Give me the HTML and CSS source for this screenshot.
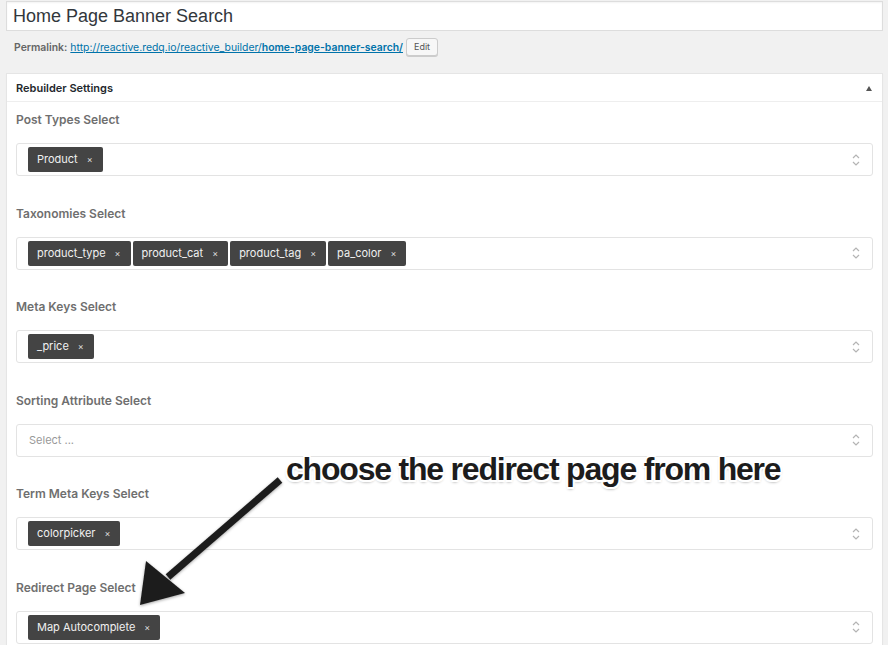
FILE: index.html
```html
<!DOCTYPE html>
<html>
<head>
<meta charset="utf-8">
<link rel="stylesheet" href="styles.css">
</head>
<body>
<div class="wrap">
  <div class="title-input">Home Page Banner Search</div>
  <div class="permalink">
    <span class="pl-label">Permalink:</span>
    <a class="pl-link" href="#">http://reactive.redq.io/reactive_builder/<b>home-page-banner-search/</b></a>
    <span class="edit-btn">Edit</span>
  </div>
  <div class="postbox">
    <div class="postbox-head">
      <span class="head-title">Rebuilder Settings</span>
      <span class="toggle"></span>
    </div>
    <div class="postbox-body">
      <div class="field">
        <div class="label">Post Types Select</div>
        <div class="select">
          <div class="chips"><span class="chip">Product<i>×</i></span></div>
          <svg class="chev" width="10" height="14" viewBox="0 0 10 14"><path d="M2 5 L5 2 L8 5 M2 9 L5 12 L8 9" fill="none" stroke="#b4b4b4" stroke-width="1.2"/></svg>
        </div>
      </div>
      <div class="field">
        <div class="label">Taxonomies Select</div>
        <div class="select">
          <div class="chips"><span class="chip">product_type<i>×</i></span><span class="chip">product_cat<i>×</i></span><span class="chip">product_tag<i>×</i></span><span class="chip">pa_color<i>×</i></span></div>
          <svg class="chev" width="10" height="14" viewBox="0 0 10 14"><path d="M2 5 L5 2 L8 5 M2 9 L5 12 L8 9" fill="none" stroke="#b4b4b4" stroke-width="1.2"/></svg>
        </div>
      </div>
      <div class="field">
        <div class="label">Meta Keys Select</div>
        <div class="select">
          <div class="chips"><span class="chip">_price<i>×</i></span></div>
          <svg class="chev" width="10" height="14" viewBox="0 0 10 14"><path d="M2 5 L5 2 L8 5 M2 9 L5 12 L8 9" fill="none" stroke="#b4b4b4" stroke-width="1.2"/></svg>
        </div>
      </div>
      <div class="field">
        <div class="label">Sorting Attribute Select</div>
        <div class="select">
          <div class="chips"><span class="placeholder">Select ...</span></div>
          <svg class="chev" width="10" height="14" viewBox="0 0 10 14"><path d="M2 5 L5 2 L8 5 M2 9 L5 12 L8 9" fill="none" stroke="#b4b4b4" stroke-width="1.2"/></svg>
        </div>
      </div>
      <div class="field">
        <div class="label">Term Meta Keys Select</div>
        <div class="select">
          <div class="chips"><span class="chip">colorpicker<i>×</i></span></div>
          <svg class="chev" width="10" height="14" viewBox="0 0 10 14"><path d="M2 5 L5 2 L8 5 M2 9 L5 12 L8 9" fill="none" stroke="#b4b4b4" stroke-width="1.2"/></svg>
        </div>
      </div>
      <div class="field">
        <div class="label">Redirect Page Select</div>
        <div class="select">
          <div class="chips"><span class="chip">Map Autocomplete<i>×</i></span></div>
          <svg class="chev" width="10" height="14" viewBox="0 0 10 14"><path d="M2 5 L5 2 L8 5 M2 9 L5 12 L8 9" fill="none" stroke="#b4b4b4" stroke-width="1.2"/></svg>
        </div>
      </div>
    </div>
  </div>
</div>
<svg class="arrow" width="888" height="645" viewBox="0 0 888 645">
  <defs>
    <filter id="sh" x="-20%" y="-20%" width="140%" height="140%">
      <feDropShadow dx="0" dy="1" stdDeviation="1.5" flood-color="#000" flood-opacity="0.35"/>
    </filter>
  </defs>
  <g filter="url(#sh)">
    <line x1="280" y1="480" x2="168" y2="577" stroke="#1e1e1e" stroke-width="7"/>
    <polygon points="140,605 146,561 185,593" fill="#1e1e1e"/>
  </g>
</svg>
<div class="note">choose the redirect page from here</div>
</body>
</html>
```
FILE: styles.css
```css
html, body {
  margin: 0;
  padding: 0;
  background: #f1f1f1;
  font-family: Inter, "Helvetica Neue", Arial, sans-serif;
  color: #23282d;
}
.wrap {
  padding: 1px 5px 0 6px;
}
.title-input {
  height: 28px;
  background: #fff;
  border: 1px solid #ddd;
  box-shadow: inset 0 1px 2px rgba(0,0,0,0.05);
  font-size: 18px;
  line-height: 28px;
  padding-left: 6px;
  color: #32373c;
  font-family: "Liberation Sans", Arial, sans-serif;
}
.permalink {
  display: flex;
  align-items: center;
  height: 20px;
  margin-top: 6px;
  padding-left: 8px;
  font-size: 10.4px;
  font-family: Inter, Arial, sans-serif;
}
.pl-label {
  font-weight: 600;
  color: #666;
  margin-right: 3px;
}
.pl-link {
  color: #0073aa;
  text-decoration: underline;
}
.pl-link b { font-weight: 600; }
.edit-btn {
  margin-left: 3px;
  height: 16px;
  padding: 0 7px;
  border: 1px solid #ccc;
  border-radius: 3px;
  background: #f7f7f7;
  box-shadow: 0 1px 0 #ccc;
  color: #555;
  font-size: 9px;
  line-height: 16px;
}
.postbox {
  margin-top: 16px;
  background: #fff;
  border: 1px solid #e5e5e5;
  box-shadow: 0 1px 1px rgba(0,0,0,0.04);
}
.postbox-head {
  height: 27px;
  border-bottom: 1px solid #eee;
  display: flex;
  align-items: center;
  justify-content: space-between;
  padding: 0 10px 0 9px;
}
.head-title {
  font-size: 11px;
  font-weight: 600;
  color: #23282d;
}
.toggle {
  width: 0;
  height: 0;
  border-left: 3.5px solid transparent;
  border-right: 3.5px solid transparent;
  border-bottom: 5px solid #555;
  margin-top: 1px;
}
.postbox-body {
  padding: 0 9px 0 9px;
}
.field {
  padding-top: 10px;
  padding-bottom: 19.6px;
}
.label {
  font-size: 12px;
  font-weight: 600;
  color: #6f6f6f;
  height: 16px;
  line-height: 16px;
}
.select {
  margin-top: 15px;
  height: 31px;
  border: 1px solid #e3e3e3;
  border-radius: 3px;
  display: flex;
  align-items: center;
  justify-content: space-between;
  padding: 0 11px 0 11px;
}
.chips {
  display: flex;
  gap: 2px;
  align-items: center;
}
.chip {
  height: 25px;
  line-height: 25px;
  background: #444;
  color: #f0f0f0;
  border-radius: 2px;
  font-size: 11px;
  padding: 0 10px 0 9px;
  display: inline-flex;
  align-items: center;
}
.chip i {
  font-style: normal;
  font-size: 9px;
  color: #ddd;
  margin-left: 9px;
}
.placeholder {
  font-size: 11px;
  color: #999;
  padding-left: 1px;
}
.chev { display: block; }
.arrow {
  position: absolute;
  left: 0;
  top: 0;
  pointer-events: none;
}
.note {
  position: absolute;
  left: 286px;
  top: 451px;
  font-family: "Liberation Sans", Arial, sans-serif;
  font-weight: bold;
  font-size: 32px;
  letter-spacing: -1.2px;
  line-height: 36px;
  color: #1c1c1c;
  white-space: nowrap;
  text-shadow:
    -1.5px -1.5px 0 #fff, 1.5px -1.5px 0 #fff, -1.5px 1.5px 0 #fff, 1.5px 1.5px 0 #fff,
    0 -2px 0 #fff, 0 2px 0 #fff, -2px 0 0 #fff, 2px 0 0 #fff,
    0 2px 3px rgba(0,0,0,0.45);
}
```
